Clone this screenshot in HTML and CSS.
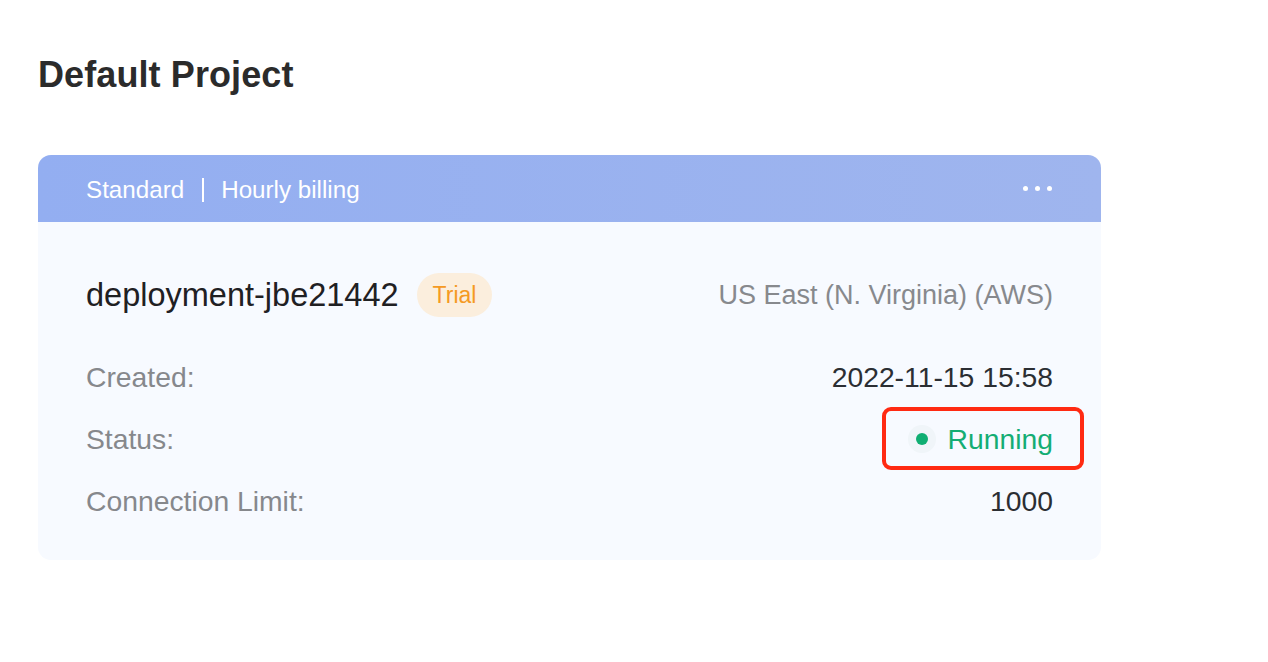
FILE: index.html
```html
<!DOCTYPE html>
<html>
<head>
<meta charset="utf-8">
<link rel="stylesheet" href="styles.css">
</head>
<body>
<main class="page">
  <h1 class="title">Default Project</h1>
  <section class="card">
    <header class="card-head">
      <div class="plan">
        <span>Standard</span>
        <span class="divider"></span>
        <span>Hourly billing</span>
      </div>
      <div class="more"><i></i><i></i><i></i></div>
    </header>
    <div class="card-body">
      <div class="name-row">
        <div class="name">
          <span class="deploy">deployment-jbe21442</span>
          <span class="badge">Trial</span>
        </div>
        <span class="region">US East (N. Virginia) (AWS)</span>
      </div>
      <div class="row">
        <span class="label">Created:</span>
        <span class="value">2022-11-15 15:58</span>
      </div>
      <div class="row">
        <span class="label">Status:</span>
        <span class="status">
          <span class="dot"></span>
          <span>Running</span>
          <span class="highlight"></span>
        </span>
      </div>
      <div class="row">
        <span class="label">Connection Limit:</span>
        <span class="value">1000</span>
      </div>
    </div>
  </section>
</main>
</body>
</html>
```
FILE: styles.css
```css
html, body {
  margin: 0;
  padding: 0;
  background: #ffffff;
  font-family: "Liberation Sans", Arial, sans-serif;
}

.page {
  padding: 52px 0 0 38px;
  width: 1063px;
}

.title {
  margin: 0;
  font-size: 36px;
  line-height: 46px;
  font-weight: 700;
  color: #2b2b2b;
  letter-spacing: 0.1px;
}

.card {
  margin-top: 57px;
  border-radius: 13px;
  overflow: hidden;
  background: #f7faff;
}

.card-head {
  height: 67px;
  box-sizing: border-box;
  padding: 3px 49px 0 48px;
  display: flex;
  align-items: center;
  justify-content: space-between;
  background: linear-gradient(90deg, #93aef1 0%, #9fb5ee 100%);
  color: #ffffff;
  font-size: 24.2px;
}

.plan {
  display: flex;
  align-items: center;
}

.divider {
  width: 2px;
  height: 24px;
  background: #ffffff;
  margin: 0 17px 0 18px;
}

.more {
  display: flex;
  gap: 7px;
  align-items: center;
  margin-top: -3px;
}

.more i {
  display: block;
  width: 5px;
  height: 5px;
  border-radius: 50%;
  background: #ffffff;
}

.card-body {
  padding: 51px 48px 28px 48px;
}

.name-row {
  height: 44px;
  display: flex;
  align-items: center;
  justify-content: space-between;
  margin-bottom: 29px;
}

.name {
  display: flex;
  align-items: center;
}

.deploy {
  font-size: 32.5px;
  color: #1f2023;
}

.badge {
  margin-left: 18px;
  height: 44px;
  padding: 0 16px;
  border-radius: 22px;
  background: #fbeedd;
  color: #f59a23;
  font-size: 23px;
  display: flex;
  align-items: center;
}

.region {
  font-size: 27px;
  color: #87898d;
}

.row {
  height: 62px;
  display: flex;
  align-items: center;
  justify-content: space-between;
  font-size: 28.3px;
}

.label {
  color: #86888c;
}

.value {
  color: #2b2e33;
}

.status {
  position: relative;
  display: flex;
  align-items: center;
  color: #14ad74;
}

.dot {
  width: 12px;
  height: 12px;
  border-radius: 50%;
  background: #0fae72;
  margin-right: 20px;
  box-shadow: 0 0 0 8px #f0f5f9;
}

.highlight {
  position: absolute;
  left: -34px;
  right: -31px;
  top: -16px;
  bottom: -14px;
  border: 4px solid #ff2a12;
  border-radius: 9px;
}
```
